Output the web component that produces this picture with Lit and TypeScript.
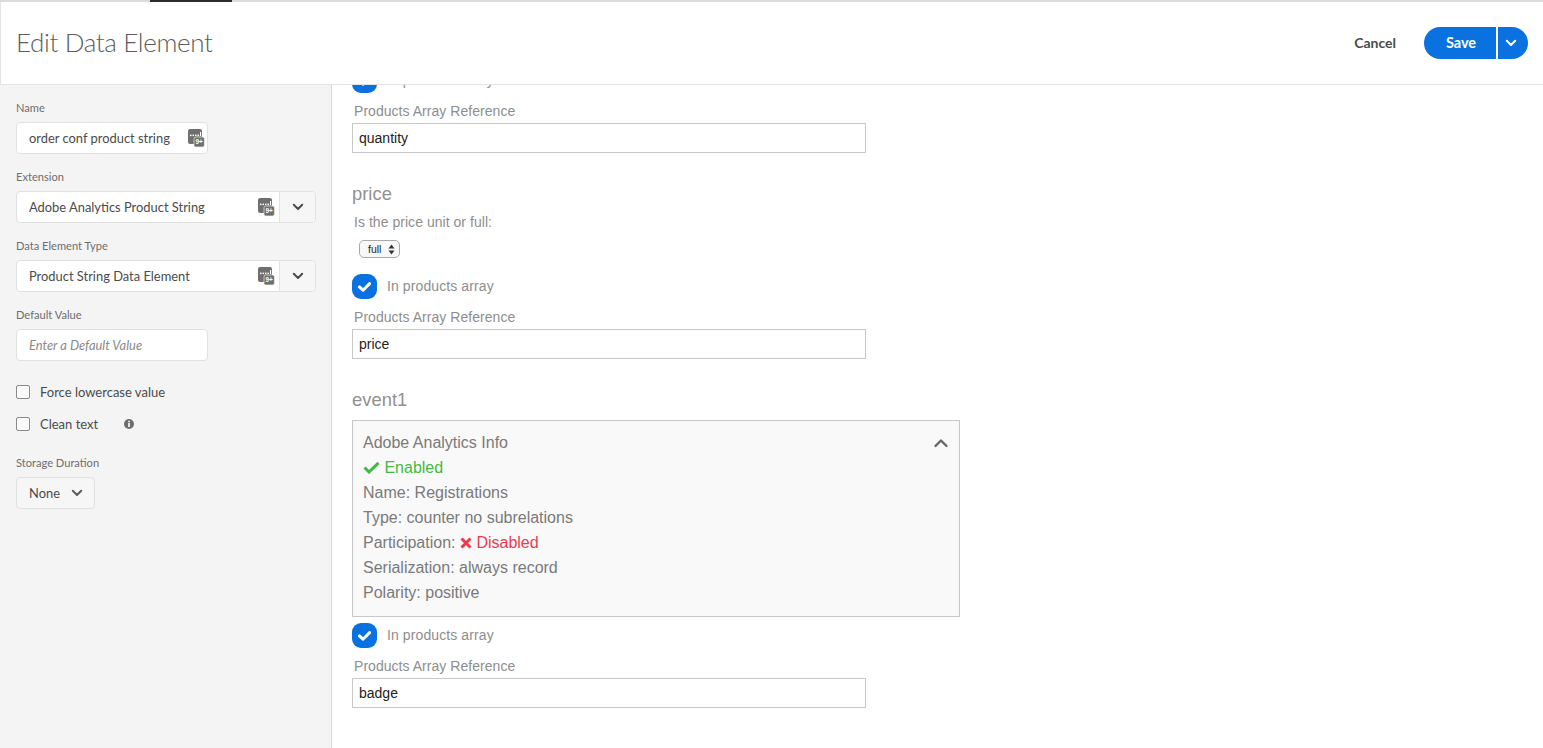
import { LitElement, html, css } from "lit";
import { customElement } from "lit/decorators.js";

const dataIcon = html`<svg class="de" width="20" height="20" viewBox="0 0 20 20">
  <rect x="1" y="1" width="14" height="15" rx="2" fill="#6f6f6f"></rect>
  <rect x="3" y="6.6" width="1.5" height="1.5" fill="#fff"></rect>
  <rect x="5.5" y="6.6" width="1.5" height="1.5" fill="#fff"></rect>
  <rect x="8" y="6.6" width="1.5" height="1.5" fill="#fff"></rect>
  <rect x="10.5" y="6.6" width="1.5" height="1.5" fill="#fff"></rect>
  <rect x="13" y="4" width="1.1" height="4.1" fill="#fff"></rect>
  <rect x="7" y="9" width="10.4" height="10" rx="1.8" fill="#6f6f6f" stroke="#ececec" stroke-width="0.7"></rect>
  <text x="12.2" y="16.4" font-size="6.5" font-weight="700" fill="#fff" text-anchor="middle" font-family="Liberation Sans, sans-serif">9+</text>
</svg>`;

const chevron = (w = 12, color = "#4b4b4b") => html`<svg width=${w} height=${w} viewBox="0 0 12 12" fill="none"><path d="M1.8 3.8 L6 8 L10.2 3.8" stroke=${color} stroke-width="2" stroke-linecap="round" stroke-linejoin="round"></path></svg>`;

const checkMark = html`<svg width="25" height="25" viewBox="0 0 25 25"><rect width="25" height="25" rx="9" fill="#0a72e0"></rect><path d="M7.4 12.9 L11 16.2 L17.6 9.6" fill="none" stroke="#fff" stroke-width="3" stroke-linecap="round" stroke-linejoin="round"></path></svg>`;

@customElement("app-root")
export class AppRoot extends LitElement {
  static styles = css`
    :host { display: flex; flex-direction: column; width: 1543px; height: 748px; overflow: hidden; background: #fff; font-family: "Liberation Sans", Arial, sans-serif; }
    .topbar { height: 2px; flex: none; background: #dcdcdc; padding-left: 150px; }
    .topbar i { display: block; width: 82px; height: 2px; background: #2b2b2b; }
    header { flex: none; height: 83px; box-sizing: border-box; border-bottom: 1px solid #e4e4e4; border-left: 1px solid #e4e4e4; display: flex; align-items: center; padding: 0 15px 0 15px; font-family: Lato, sans-serif; }
    h1 { margin: 0 0 2px; font-weight: 300; font-size: 26px; letter-spacing: -0.36px; color: #5c5c5c; flex: 1; }
    .cancel { font-size: 14px; font-weight: 700; color: #4b4b4b; margin: 0 28px 2px 0; }
    .save { display: flex; height: 32px; }
    .save div { background: #0a72e0; color: #fff; display: flex; align-items: center; justify-content: center; }
    .save .l { width: 72px; box-sizing: border-box; padding: 0 0 2px 2px; border-radius: 16px 0 0 16px; font-size: 14.5px; font-weight: 700; }
    .save .r { width: 30px; margin-left: 2px; border-radius: 0 16px 16px 0; padding-right: 4px; box-sizing: border-box; }
    .body { flex: 1; display: flex; min-height: 0; }
    aside { width: 332px; flex: none; box-sizing: border-box; background: #f4f4f4; border-right: 1px solid #d8d8d8; padding: 15px 15px 0 16px; font-family: Lato, sans-serif; }
    .lab { font-size: 11.1px; line-height: 15px; color: #6e6e6e; margin-bottom: 7px; }
    .field { margin-bottom: 15px; }
    .box { height: 32px; box-sizing: border-box; background: #fff; border: 1px solid #e1e1e1; border-radius: 4px; display: flex; align-items: center; font-size: 12.9px; color: #4b4b4b; padding-left: 12px; }
    .w192 { width: 192px; }
    .val { flex: 1; white-space: nowrap; }
    .de { flex: none; }
    .ph { font-style: italic; color: #8a8a8a; }
    .combo { padding-left: 0; }
    .combo .main { flex: 1; display: flex; align-items: center; padding-left: 12px; padding-right: 2px; }
    .combo .btn { width: 35px; height: 100%; flex: none; background: #f6f6f6; border-left: 1px solid #e1e1e1; border-radius: 0 4px 4px 0; display: flex; align-items: center; justify-content: center; }
    .cbs { padding: 7px 0 8px; }
    .cb { display: flex; align-items: center; font-size: 13px; color: #4b4b4b; height: 18px; margin-bottom: 14px; }
    .cb .sq { width: 14px; height: 14px; box-sizing: border-box; border: 1.5px solid #8a8a8a; border-radius: 2px; background: #fbfbfb; margin-right: 10px; flex: none; }
    .cb svg { margin-left: 25px; }
    .store { width: 79px; background: #f6f6f6; justify-content: space-between; padding-right: 11px; }
    main { flex: 1; overflow: hidden; min-width: 0; padding-left: 20px; }
    .scroll { margin-top: -17px; }
    .check { display: flex; align-items: center; height: 25px; font-size: 14px; letter-spacing: 0.1px; color: #8e8e8e; gap: 10px; }
    .check span { padding-bottom: 2px; }
    .ref { font-size: 14px; letter-spacing: 0.04px; line-height: 16px; color: #8e8e8e; margin: 10px 0 4px 2px; }
    .inp { width: 514px; height: 30px; box-sizing: border-box; border: 1px solid #c8c8c8; font-size: 14px; color: #222; display: flex; align-items: center; padding-left: 6px; }
    h2 { margin: 30px 0 0; font-weight: 400; font-size: 18.4px; line-height: 22px; color: #919191; }
    .q { font-size: 14px; letter-spacing: 0.04px; line-height: 16px; color: #8e8e8e; margin: 9px 0 0 2px; }
    .sel { margin: 10px 0 16px 7px; width: 41px; height: 18px; box-sizing: border-box; border: 1px solid #a9a9a9; border-radius: 5px; background: #f8f8f8; font-size: 10.5px; color: #222; display: flex; align-items: center; justify-content: space-between; padding: 0 4px 0 8px; }
    .info { width: 608px; height: 197px; margin: 9px 0 6px; box-sizing: border-box; border: 1px solid #c8c8c8; background: #f9f9f9; padding: 9px 10px; font-size: 16px; line-height: 25px; color: #7a7a7a; }
    .info .row { display: flex; align-items: center; justify-content: space-between; }
    .green { color: #44b944; }
    .red { color: #ee3a4c; }
    .info svg { vertical-align: -1px; }
  `;

  private check(label: string) {
    return html`<div class="check">${checkMark}<span>${label}</span></div>`;
  }
  private ref(value: string) {
    return html`<div class="ref">Products Array Reference</div><div class="inp">${value}</div>`;
  }

  render() {
    return html`
      <div class="topbar"><i></i></div>
      <header>
        <h1>Edit Data Element</h1>
        <span class="cancel">Cancel</span>
        <div class="save"><div class="l">Save</div><div class="r">${chevron(12, "#fff")}</div></div>
      </header>
      <div class="body">
        <aside>
          <div class="field"><div class="lab">Name</div><div class="box w192"><span class="val">order conf product string</span>${dataIcon}</div></div>
          <div class="field"><div class="lab">Extension</div><div class="box combo"><div class="main"><span class="val">Adobe Analytics Product String</span>${dataIcon}</div><div class="btn">${chevron()}</div></div></div>
          <div class="field"><div class="lab">Data Element Type</div><div class="box combo"><div class="main"><span class="val">Product String Data Element</span>${dataIcon}</div><div class="btn">${chevron()}</div></div></div>
          <div class="field"><div class="lab">Default Value</div><div class="box w192"><span class="val ph">Enter a Default Value</span></div></div>
          <div class="cbs">
            <div class="cb"><span class="sq"></span>Force lowercase value</div>
            <div class="cb"><span class="sq"></span>Clean text<svg width="12" height="12" viewBox="0 0 12 12"><circle cx="6" cy="6" r="5" fill="#6e6e6e"></circle><rect x="5.2" y="5" width="1.6" height="4" fill="#fff"></rect><rect x="5.2" y="2.8" width="1.6" height="1.5" fill="#fff"></rect></svg></div>
          </div>
          <div class="field"><div class="lab">Storage Duration</div><div class="box store"><span>None</span>${chevron(12, "#5c5c5c")}</div></div>
        </aside>
        <main>
          <div class="scroll">
            ${this.check("In products array")}
            ${this.ref("quantity")}
            <h2>price</h2>
            <div class="q">Is the price unit or full:</div>
            <div class="sel">full<svg width="7" height="11" viewBox="0 0 7 11"><path d="M3.5 0.5 L6.5 4.5 H0.5 Z M3.5 10.5 L0.5 6.5 H6.5 Z" fill="#333"></path></svg></div>
            ${this.check("In products array")}
            ${this.ref("price")}
            <h2>event1</h2>
            <div class="info">
              <div class="row"><span>Adobe Analytics Info</span><svg width="16" height="16" viewBox="0 0 16 16" fill="none"><path d="M2.5 11 L8 5.5 L13.5 11" stroke="#666" stroke-width="2.4" stroke-linecap="round" stroke-linejoin="round"></path></svg></div>
              <div class="green"><svg width="17" height="13" viewBox="0 0 17 13" fill="none"><path d="M1.5 6.5 L6 11 L15.5 1.8" stroke="#44b944" stroke-width="3"></path></svg> Enabled</div>
              <div>Name: Registrations</div>
              <div>Type: counter no subrelations</div>
              <div>Participation: <span class="red"><svg width="12" height="12" viewBox="0 0 12 12" fill="none"><path d="M1.5 1.5 L10.5 10.5 M10.5 1.5 L1.5 10.5" stroke="#ee3a4c" stroke-width="3"></path></svg> Disabled</span></div>
              <div>Serialization: always record</div>
              <div>Polarity: positive</div>
            </div>
            ${this.check("In products array")}
            ${this.ref("badge")}
          </div>
        </main>
      </div>
    `;
  }
}
